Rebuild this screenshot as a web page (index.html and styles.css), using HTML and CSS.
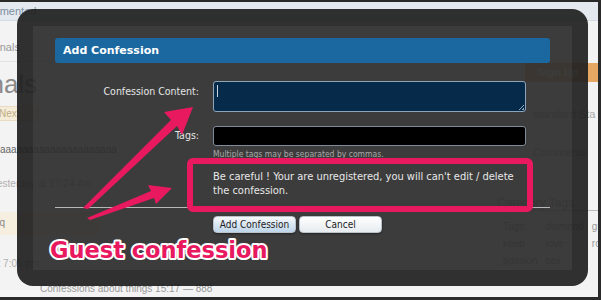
FILE: index.html
```html
<!DOCTYPE html>
<html>
<head>
<meta charset="utf-8">
<link rel="stylesheet" href="styles.css">
</head>
<body>
<div class="screen">
  <div class="topbar"><span class="topbar-text">Most commented</span></div>
  <div class="cols">
    <div class="left">
      <div class="nav-item">Personals</div>
      <div class="heading">Journals</div>
      <div class="pill">Next</div>
      <div class="entry">aaaaaaaaaaaaaaaaaaaaa</div>
      <div class="entry muted">yesterday at 17:24 4m</div>
      <div class="entry beige">qq</div>
      <div class="entry muted">at 7:05 pm</div>
    </div>
    <div class="main"></div>
    <div class="right">
      <div class="signup">Sign Up</div>
      <div class="ghost-line">standard Sta</div>
      <div class="ghost-line">Comments</div>
      <div class="ghost-link">Category Tags</div>
      <div class="tags">
        <span>Tags:</span><span>diamond</span><span>girl</span>
        <span>keep</span><span>love</span><span>romance</span>
        <span>passion</span><span>sex</span>
      </div>
    </div>
  </div>
  <div class="bottom-line">Confessions about things 15:17 — 888</div>

  <div class="modal">
    <div class="inner">
      <div class="dialog">
        <div class="dialog-header">Add Confession</div>
        <div class="form">
          <label class="label">Confession Content:</label>
          <div class="textarea"><span class="caret"></span><span class="grip"></span></div>
          <label class="label label-tags">Tags:</label>
          <div class="input-tags"></div>
          <div class="hint">Multiple tags may be separated by commas.</div>
          <div class="warning">Be careful ! Your are unregistered, you will can't edit / delete the confession.</div>
        </div>
        <div class="rule"></div>
        <div class="buttons">
          <button class="btn btn-primary">Add Confession</button>
          <button class="btn">Cancel</button>
        </div>
      </div>
    </div>
  </div>
</div>

<svg class="annot" width="601" height="300" viewBox="0 0 601 300">
  <rect x="190" y="161" width="340" height="48" rx="3" ry="3" fill="none" stroke="#e8195f" stroke-width="6"/>
  <polygon fill="#e8195f" points="83,208 171,120 164,112 193,107 182,135 177,126 88,209"/>
  <polygon fill="#e8195f" points="87,218 151,191 148,185 172,188 156,204 154,198 90,220"/>
  <text class="guest" x="50" y="258">Guest confession</text>
</svg>
</body>
</html>
```

FILE: styles.css
```css
html, body {
  margin: 0;
  padding: 0;
}
body {
  background: #2a2a2a;
  width: 601px;
  height: 300px;
  overflow: hidden;
  font-family: "DejaVu Sans Condensed", "DejaVu Sans", sans-serif;
}
.screen {
  position: relative;
  margin-top: 2px;
  width: 598px;
  height: 295px;
  background: #f3f3f3;
  overflow: hidden;
}
.topbar {
  height: 18px;
  background: #e3e9ef;
  border-bottom: 1px solid #d5dbe2;
  font-family: "Liberation Sans", sans-serif;
  font-size: 11px;
  line-height: 18px;
  color: #7d90a5;
}
.topbar-text {
  margin-left: -48px;
}
.cols {
  display: flex;
  height: 260px;
}
.left {
  width: 100px;
  font-family: "Liberation Sans", sans-serif;
  color: #777;
}
.nav-item {
  font-size: 11px;
  padding-top: 20px;
  padding-bottom: 8px;
  margin-left: -29px;
  border-bottom: 1px solid #e2e2e2;
  color: #999;
}
.heading {
  font-size: 26px;
  line-height: 28px;
  color: #8a8a8a;
  margin-top: 8px;
  margin-left: -61px;
}
.pill {
  margin-top: 8px;
  margin-left: -5px;
  width: 36px;
  font-size: 10px;
  line-height: 11px;
  background: #f4ecd8;
  color: #c0ad85;
  border: 1px solid #e8dcc0;
  padding: 1px 3px;
}
.entry {
  font-size: 10px;
  margin-top: 23px;
  color: #666;
  white-space: nowrap;
}
.muted {
  color: #b0b0b0;
  margin-left: -8px;
}
.beige {
  background: #f6efe0;
  padding-top: 5px;
  padding-bottom: 7px;
  margin-left: -6px;
  color: #888;
}
.main {
  flex: 1;
}
.right {
  width: 105px;
  font-family: "Liberation Sans", sans-serif;
  font-size: 11px;
  color: #aaa;
}
.signup {
  margin-top: 42px;
  margin-left: 32px;
  height: 19px;
  line-height: 19px;
  background: #e6a863;
  color: #fff;
  font-weight: bold;
  padding-left: 12px;
  border-radius: 3px 0 0 3px;
}
.ghost-line {
  margin-top: 26px;
  margin-left: 40px;
  white-space: nowrap;
}
.ghost-link {
  margin-top: 38px;
  margin-left: 4px;
  border-bottom: 1px solid #bbb;
  white-space: nowrap;
  font-size: 12px;
}
.tags {
  margin-top: 10px;
  margin-left: 10px;
  display: grid;
  grid-template-columns: repeat(3, auto);
  row-gap: 6px;
  column-gap: 8px;
  font-size: 10px;
  color: #999;
}
.bottom-line {
  font-family: "Liberation Sans", sans-serif;
  font-size: 10px;
  color: #999;
  margin-top: 2px;
  padding-left: 40px;
  white-space: nowrap;
}

/* modal */
.modal {
  position: absolute;
  left: 17px;
  top: 7px;
  width: 571px;
  height: 277px;
  box-sizing: border-box;
  padding: 17px 16px 16px 16px;
  border-radius: 16px;
  background: rgba(32, 32, 32, 0.93);
}
.inner {
  height: 100%;
  box-sizing: border-box;
  background: rgba(255, 255, 255, 0.06);
  padding: 12px 22px 0 22px;
}
.dialog-header {
  height: 25px;
  line-height: 25px;
  background: #1b68a0;
  border-radius: 3px;
  color: #fff;
  font-family: "DejaVu Sans", sans-serif;
  font-weight: bold;
  font-size: 11px;
  padding-left: 8px;
}
.form {
  display: grid;
  grid-template-columns: 144px 313px;
  column-gap: 14px;
  margin-top: 18px;
  color: #e6e6e6;
  font-size: 10.5px;
}
.label {
  text-align: right;
  padding-top: 4px;
  line-height: 13px;
}
.label-tags {
  margin-top: 14px;
  padding-top: 3px;
}
.textarea {
  position: relative;
  height: 31px;
  box-sizing: border-box;
  background: #052a4a;
  border: 1px solid #8ea4b8;
  border-radius: 3px;
}
.caret {
  position: absolute;
  left: 3px;
  top: 3px;
  width: 1px;
  height: 12px;
  background: #c8d4e0;
}
.grip {
  position: absolute;
  right: 1px;
  bottom: 1px;
  width: 5px;
  height: 5px;
  background: linear-gradient(135deg, transparent 45%, #8ea4b8 45%, #8ea4b8 55%, transparent 55%, transparent 75%, #8ea4b8 75%);
}
.input-tags {
  margin-top: 14px;
  height: 20px;
  box-sizing: border-box;
  background: #000;
  border: 1px solid #7e8b98;
  border-radius: 3px;
}
.hint {
  grid-column: 2;
  margin-top: 3px;
  font-size: 8.5px;
  line-height: 10px;
  color: #a8a8a8;
}
.warning {
  grid-column: 2;
  margin-top: 11px;
  font-size: 11px;
  line-height: 14px;
  color: #e8e8e8;
}
.rule {
  margin-top: 9px;
  height: 1px;
  background: #b4b8ba;
}
.buttons {
  display: flex;
  gap: 3px;
  margin-top: 8px;
  margin-left: 158px;
}
.btn {
  width: 83px;
  height: 17px;
  padding: 0;
  border: 1px solid #b9c2cb;
  border-radius: 4px;
  background: linear-gradient(#ffffff, #e6ebf0);
  font-family: "DejaVu Sans Condensed", "DejaVu Sans", sans-serif;
  font-size: 10px;
  color: #222;
  box-shadow: 0 1px 2px rgba(0, 0, 0, 0.4);
}
.btn-primary {
  background: linear-gradient(#f6f9fc, #bed5ea);
}

/* annotation overlay */
.annot {
  position: absolute;
  left: 0;
  top: 0;
}
.guest {
  font-family: "DejaVu Sans", sans-serif;
  font-weight: bold;
  font-size: 22.5px;
  fill: #e8195f;
  stroke: #ffffff;
  stroke-width: 4px;
  stroke-linejoin: round;
  paint-order: stroke;
}
```
